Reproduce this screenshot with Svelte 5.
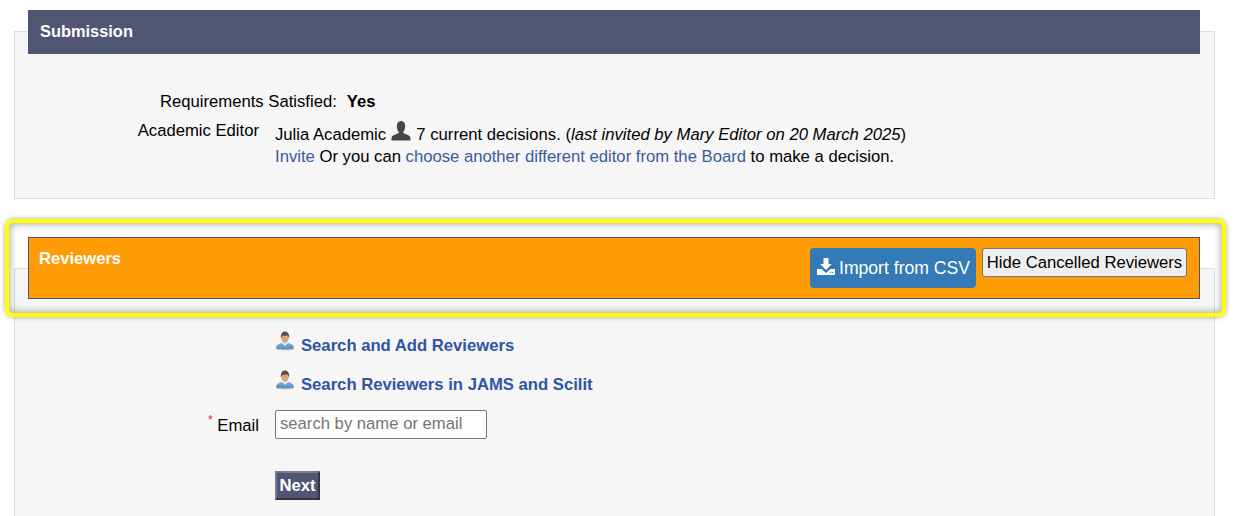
<script>
  const searchLinks = ['Search and Add Reviewers', 'Search Reviewers in JAMS and Scilit'];
</script>

<svg class="defs" width="0" height="0" aria-hidden="true">
  <defs>
    <linearGradient id="shirt" x1="0" y1="0" x2="0" y2="1">
      <stop offset="0" stop-color="#7fb2dc" />
      <stop offset="1" stop-color="#4f86b8" />
    </linearGradient>
    <symbol id="reviewer" viewBox="0 0 20 20">
      <path d="M1 17.5c0-3.2 2.6-4.6 5.6-5.4l3.4 1.4 3.4-1.4c3 .8 5.6 2.2 5.6 5.4 0 1-8 1.5-9 1.5s-9-.5-9-1.500z" fill="url(#shirt)" />
      <path d="M1 18c3 1.200 15 1.200 18 0" stroke="#c9c9c9" stroke-width="1" fill="none" />
      <path d="M7.600 12.200 10 15l2.400-2.800-1-1.600H8.600z" fill="#e8f2fa" />
      <ellipse cx="10" cy="7" rx="3.600" ry="5" fill="#d9a57e" />
      <path d="M6 7.500C5.300 2.800 7.500.500 10 .500s4.700 2.300 4 7c-.6-1.800-1.100-2.900-2.100-3.300-1.500.6-3.300.6-4.300.3C7 5.500 6.500 6.200 6 7.500z" fill="#5b4a42" />
    </symbol>
  </defs>
</svg>

<main class="page">
  <section class="panel submission">
    <h2 class="bar navy">Submission</h2>
    <div class="status">
      <span>Requirements Satisfied:</span>
      <strong>Yes</strong>
    </div>
    <div class="editor">
      <span class="editor-label">Academic Editor</span>
      <div class="editor-info">
        <p>
          Julia Academic
          <svg class="person" viewBox="0 0 20 20" aria-hidden="true">
            <path d="M10 0c2.800 0 4.200 2.300 4.200 5.200 0 2.300-.8 4.200-1.700 5.200-.5.500-.4 1.500.4 1.900l4.300 2c1.600.8 2.300 1.600 2.300 3.700v1.500H.5V18c0-2.100.7-2.900 2.300-3.700l4.300-2c.8-.4.900-1.400.4-1.900-.9-1-1.700-2.900-1.700-5.200C5.800 2.300 7.200 0 10 0z" fill="#454545" />
          </svg>
          7 current decisions. (<em>last invited by Mary Editor on 20 March 2025</em>)
        </p>
        <p><a href="#invite">Invite</a> Or you can <a href="#board">choose another different editor from the Board</a> to make a decision.</p>
      </div>
    </div>
  </section>

  <section class="panel reviewers">
    <div class="bar orange">
      <h2>Reviewers</h2>
      <div class="actions">
        <button class="import" type="button">
          <svg class="download" viewBox="0 0 18 17" aria-hidden="true">
            <path d="M6.500 0h5v6h3.300L9 12 3.200 6h3.300z" fill="#fff" />
            <path d="M0 11h4.500L9 15l4.500-4H18v6H0z" fill="#fff" />
            <path d="M13 14.500h1.200M15 14.500h1.200" stroke="#337ab7" stroke-width="1" />
          </svg>
          Import from CSV
        </button>
        <button class="hide" type="button">Hide Cancelled Reviewers</button>
      </div>
    </div>

    <div class="search-links">
      {#each searchLinks as label}
        <a class="search-link" href="#search">
          <svg class="reviewer-icon" aria-hidden="true"><use href="#reviewer" /></svg>
          {label}
        </a>
      {/each}
    </div>

    <div class="email-row">
      <label for="email"><sup>*</sup> Email</label>
      <input id="email" type="text" placeholder="search by name or email" />
    </div>

    <button class="next" type="button">Next</button>
  </section>

  <div class="highlight" aria-hidden="true"></div>
</main>

<style>
  :global(body) {
    margin: 0;
    background: #fff;
  }

  .defs {
    position: absolute;
  }

  .page {
    position: relative;
    height: 516px;
    overflow: hidden;
    padding-top: 31px;
    box-sizing: border-box;
    font-family: 'Liberation Sans', Arial, sans-serif;
    font-size: 16.67px;
    color: #000;
  }

  .panel {
    width: 1201px;
    margin-left: 14px;
    box-sizing: border-box;
    background: #f6f6f6;
    border: 1px solid #ddd;
  }

  .submission {
    height: 168px;
  }

  .bar {
    box-sizing: border-box;
    width: 1172px;
    margin: 0 0 0 13px;
    color: #fff;
    font-weight: 700;
  }

  .navy {
    height: 44px;
    margin-top: -22px;
    padding: 12px 12px 0;
    line-height: 18px;
    font-size: 16.4px;
    background: #505672;
  }

  .status {
    display: flex;
    gap: 10px;
    margin: 39px 0 0 145px;
    line-height: 18px;
  }

  .editor {
    display: flex;
    margin-top: 11px;
  }

  .editor-label {
    box-sizing: border-box;
    width: 244px;
    text-align: right;
    line-height: 18px;
  }

  .editor-info {
    margin: -1px 0 0 16px;
    line-height: 22px;
  }

  .editor-info p {
    margin: 0;
  }

  .person {
    width: 20px;
    height: 20px;
    vertical-align: -1px;
    margin: 0 0.5px;
  }

  a {
    color: #3a5ba0;
    text-decoration: none;
  }

  .reviewers {
    height: 300px;
    margin-top: 69px;
  }

  .orange {
    display: flex;
    justify-content: space-between;
    height: 62px;
    margin-top: -32px;
    border: 1px solid #505672;
    background: #ff9c05;
  }

  .orange h2 {
    margin: 12px 0 0 10px;
    font-size: 16.6px;
    line-height: 18px;
  }

  .actions {
    display: flex;
    align-items: flex-start;
    gap: 6px;
    margin: 10px 12px 0 0;
  }

  button {
    font-family: inherit;
    font-size: 16.67px;
  }

  .import {
    display: flex;
    align-items: center;
    gap: 4px;
    height: 40px;
    padding: 0 6px 0 7px;
    margin: 0;
    border: 0;
    border-radius: 4px;
    background: #337ab7;
    color: #fff;
    font-size: 17.6px;
  }

  .download {
    width: 18px;
    height: 17px;
    margin-top: -3px;
  }

  .hide {
    width: 205px;
    height: 29px;
    padding: 0;
    margin: 0;
    border: 1px solid #767676;
    border-radius: 3px;
    background: #efefef;
    color: #000;
  }

  .search-links {
    display: flex;
    flex-direction: column;
    gap: 16px;
    margin: 34px 0 0 260px;
  }

  .search-link {
    display: flex;
    align-items: flex-end;
    gap: 6px;
    height: 23px;
    color: #2f55a4;
    font-weight: 700;
  }

  .reviewer-icon {
    width: 20px;
    height: 20px;
    margin-bottom: 5px;
  }

  .email-row {
    display: flex;
    align-items: center;
    gap: 16px;
    margin-top: 15px;
  }

  label {
    width: 244px;
    margin-top: 2px;
    text-align: right;
    line-height: 18px;
  }

  sup {
    color: #c9302c;
    font-size: 12px;
    line-height: 0;
  }

  input {
    box-sizing: border-box;
    width: 212px;
    height: 29px;
    padding: 0 4px 2px;
    margin: 0;
    border: 1px solid #767676;
    border-radius: 2px;
    background: #fff;
    font-family: inherit;
    font-size: 16.67px;
  }

  input::placeholder {
    color: #757575;
    opacity: 1;
  }

  .next {
    display: block;
    box-sizing: border-box;
    width: 45px;
    height: 29px;
    padding: 0;
    margin: 32px 0 0 260px;
    border: 2px outset #767b95;
    border-radius: 0;
    background: #505672;
    color: #fff;
    font-weight: 700;
  }

  .highlight {
    position: absolute;
    left: 5px;
    top: 219px;
    width: 1221px;
    height: 98px;
    box-sizing: border-box;
    border: 4px solid #ffff00;
    border-radius: 8px;
    box-shadow:
      0 0 5px rgba(0, 0, 0, 0.35),
      inset 0 0 8px rgba(0, 0, 0, 0.4);
    pointer-events: none;
  }
</style>
